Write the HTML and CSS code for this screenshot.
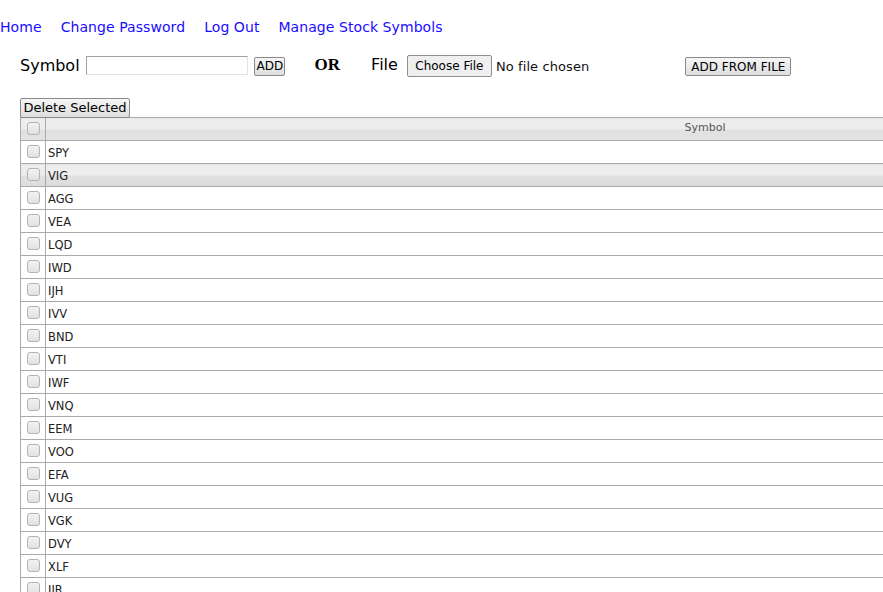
FILE: index.html
```html
<!DOCTYPE html>
<html>
<head>
<meta charset="utf-8">
<link rel="stylesheet" href="styles.css">
</head>
<body>
<nav class="nav">
  <a href="#">Home</a>
  <a href="#">Change Password</a>
  <a href="#">Log Out</a>
  <a href="#">Manage Stock Symbols</a>
</nav>
<form class="addrow">
  <label class="lbl">Symbol</label>
  <input class="symbol-input" type="text">
  <button type="button" class="btn btn-add">ADD</button>
  <span class="or">OR</span>
  <label class="lbl file-lbl">File</label>
  <button type="button" class="btn-file">Choose File</button>
  <span class="nofile">No file chosen</span>
  <button type="button" class="btn btn-fromfile">ADD FROM FILE</button>
</form>
<div class="delrow"><button type="button" class="btn btn-del">Delete Selected</button></div>
<table class="grid">
  <thead>
    <tr><th class="cb"><span class="chk"></span></th><th class="sym">Symbol</th></tr>
  </thead>
  <tbody>
    <tr><td class="cb"><span class="chk"></span></td><td>SPY</td></tr>
    <tr class="hl"><td class="cb"><span class="chk"></span></td><td>VIG</td></tr>
    <tr><td class="cb"><span class="chk"></span></td><td>AGG</td></tr>
    <tr><td class="cb"><span class="chk"></span></td><td>VEA</td></tr>
    <tr><td class="cb"><span class="chk"></span></td><td>LQD</td></tr>
    <tr><td class="cb"><span class="chk"></span></td><td>IWD</td></tr>
    <tr><td class="cb"><span class="chk"></span></td><td>IJH</td></tr>
    <tr><td class="cb"><span class="chk"></span></td><td>IVV</td></tr>
    <tr><td class="cb"><span class="chk"></span></td><td>BND</td></tr>
    <tr><td class="cb"><span class="chk"></span></td><td>VTI</td></tr>
    <tr><td class="cb"><span class="chk"></span></td><td>IWF</td></tr>
    <tr><td class="cb"><span class="chk"></span></td><td>VNQ</td></tr>
    <tr><td class="cb"><span class="chk"></span></td><td>EEM</td></tr>
    <tr><td class="cb"><span class="chk"></span></td><td>VOO</td></tr>
    <tr><td class="cb"><span class="chk"></span></td><td>EFA</td></tr>
    <tr><td class="cb"><span class="chk"></span></td><td>VUG</td></tr>
    <tr><td class="cb"><span class="chk"></span></td><td>VGK</td></tr>
    <tr><td class="cb"><span class="chk"></span></td><td>DVY</td></tr>
    <tr><td class="cb"><span class="chk"></span></td><td>XLF</td></tr>
    <tr><td class="cb"><span class="chk"></span></td><td>IJR</td></tr>
  </tbody>
</table>
</body>
</html>
```
FILE: styles.css
```css
html, body {
  margin: 0;
  padding: 0;
  background: #fff;
  overflow: hidden;
}
body {
  font-family: "DejaVu Sans", Verdana, sans-serif;
  color: #000;
}
.nav {
  display: flex;
  gap: 19px;
  padding-top: 18px;
  height: 19px;
  font-size: 14px;
  letter-spacing: 0.07px;
}
.nav a {
  color: #1a0dff;
  text-decoration: none;
  line-height: 18px;
}
.addrow {
  display: flex;
  align-items: center;
  margin: 18px 0 0 20px;
  height: 22px;
}
.lbl {
  font-size: 16px;
  line-height: 20px;
}
.symbol-input {
  box-sizing: border-box;
  width: 162px;
  height: 19px;
  margin: 0 0 2px 6px;
  border: 1px solid #a0a0a0;
  border-bottom-color: #e3e3e3;
  border-right-color: #e3e3e3;
  padding: 0;
}
.btn {
  box-sizing: border-box;
  font-family: "DejaVu Sans", Verdana, sans-serif;
  font-size: 12px;
  color: #000;
  background: linear-gradient(#f6f6f6, #dedede);
  border: 1px solid #8a8a8a;
  border-radius: 2px;
  padding: 0 2px;
  height: 19px;
  line-height: 16px;
}
.btn-add {
  margin-left: 6px;
  width: 31px;
  margin-top: 0;
}
.or {
  font-family: "Liberation Serif", serif;
  font-weight: bold;
  font-size: 17px;
  margin-left: 30px;
  margin-top: -2px;
}
.file-lbl {
  margin-left: 31px;
  margin-top: -2px;
}
.btn-file {
  box-sizing: border-box;
  margin-left: 9px;
  width: 85px;
  height: 22px;
  font-family: "DejaVu Sans", Verdana, sans-serif;
  font-size: 12px;
  color: #000;
  background: #efefef;
  border: 1px solid #8f8f8f;
  border-radius: 2px;
  padding: 0;
}
.nofile {
  font-size: 13px;
  margin-left: 4px;
  color: #111;
  letter-spacing: 0.1px;
}
.btn-fromfile {
  margin-left: 96px;
  width: 106px;
  margin-top: 1px;
  font-size: 12px;
}
.delrow {
  margin: 20px 0 0 20px;
  height: 20px;
}
.btn-del {
  width: 110px;
  height: 20px;
  font-size: 13px;
  padding: 0;
}
.grid {
  margin-left: 20px;
  width: 1343px;
  border-collapse: collapse;
  font-size: 11.5px;
  color: #222;
}
.grid th, .grid td {
  border: 1px solid #aaa;
  height: 23px;
  padding: 0 0 0 2px;
  text-align: left;
  box-sizing: border-box;
}
.grid th {
  background: linear-gradient(#ededed 0%, #ededed 50%, #e1e1e1 51%, #e3e3e3 100%);
  font-weight: normal;
  font-size: 11px;
  color: #555;
  text-align: center;
  vertical-align: top;
  padding-top: 3px;
}
.grid td {
  padding-top: 2px;
}
.grid th.cb, .grid td.cb {
  width: 25px;
  padding: 0;
  text-align: center;
  vertical-align: top;
}
.grid tr.hl td {
  background: linear-gradient(#ededed 0%, #ededed 50%, #e1e1e1 51%, #dcdcdc 100%);
}
.chk {
  display: inline-block;
  box-sizing: border-box;
  width: 13px;
  height: 13px;
  margin-top: 4px;
  border: 1px solid #b4b4b4;
  border-radius: 3px;
  background: linear-gradient(#f2f2f2, #e2e2e2);
}
```
